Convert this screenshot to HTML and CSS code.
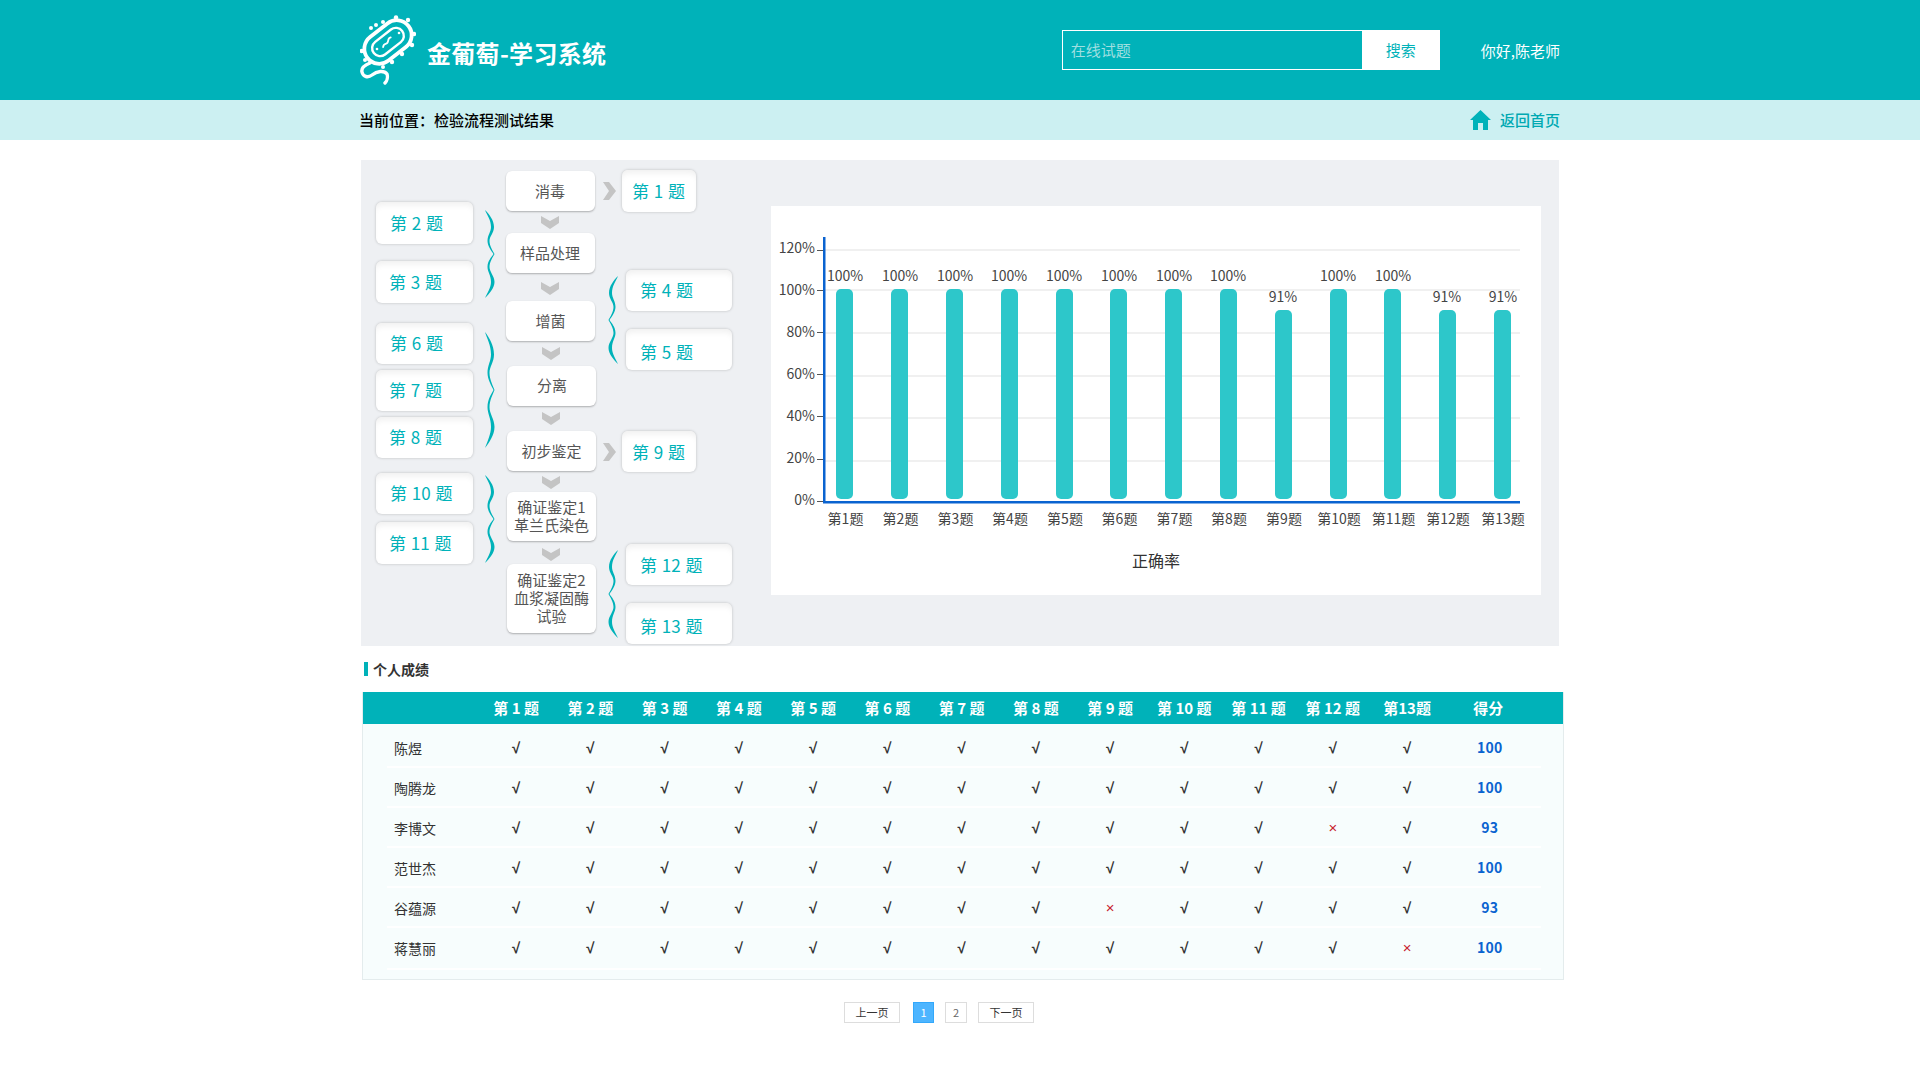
FILE: index.html
```html
<!DOCTYPE html>
<html lang="zh-CN">
<head>
<meta charset="utf-8">
<title>金葡萄-学习系统</title>
<link rel="stylesheet" href="styles.css">
</head>
<body>
<svg class="defs" width="0" height="0" aria-hidden="true">
  <defs>
    <symbol id="brace" viewBox="0 0 10 88" preserveAspectRatio="none">
      <path d="M0 0C4 4 9 10 9 17C9 23 4.500 26 4.500 31C4.500 36 8 41 9.500 44C8 47 4.500 52 4.500 57C4.500 62 9.500 66 9.500 72C9.500 78 4 84 0 88C2.500 83 6 77 6 72C6 65 2.500 62 2.500 57C2.500 51 6.500 47 8.500 44C6.500 41 2.500 36 2.500 31C2.500 25 6 22 6 17C6 10 2 5 0 0Z"/>
    </symbol>
    <symbol id="chev-d" viewBox="0 0 18 13">
      <path d="M0 0L9 5L18 0V7L9 13L0 7Z"/>
    </symbol>
    <symbol id="chev-r" viewBox="0 0 13 18">
      <path d="M0 0H6L13 9L6 18H0L6 9Z"/>
    </symbol>
  </defs>
</svg>

<header class="top">
  <div class="wrap top-in">
    <svg class="logo" viewBox="0 0 56 72" width="56" height="72">
      <g fill="none" stroke="#fff" stroke-linecap="round">
        <g transform="rotate(-38 28 27)">
          <rect x="2" y="12" width="52" height="30" rx="15" stroke-width="3.800"/>
          <rect x="10" y="19" width="36" height="16" rx="8" stroke-width="2.400"/>
          <path d="M21 28q2 -2 4 -1t4 -1t4 -1" stroke-width="1.800"/>
        </g>
        <path d="M10 48C5 50 1 53 2 57C3 62 8 63 12 60C17 56 24 55 27 59C28 62 27 66 25 68" stroke-width="3.400"/>
      </g>
      <g fill="#fff">
        <circle cx="36" cy="2.500" r="2.200"/><circle cx="48" cy="5" r="2.200"/><circle cx="54" cy="19" r="2.200"/>
        <circle cx="52" cy="30" r="2.200"/><circle cx="42" cy="39" r="2.200"/><circle cx="32" cy="47" r="2.200"/>
        <circle cx="23" cy="52" r="2"/><circle cx="11" cy="13" r="2"/><circle cx="1.800" cy="36" r="2.200"/>
        <circle cx="5" cy="45" r="2"/><circle cx="23" cy="7" r="2"/><circle cx="16" cy="10" r="2"/>
        <circle cx="39" cy="18" r="1.300"/><circle cx="17" cy="34" r="1.300"/>
      </g>
    </svg>
    <div class="brand">金葡萄-学习系统</div>
    <form class="search">
      <input class="search-input" type="text" placeholder="在线试题">
      <button class="search-btn" type="button">搜索</button>
    </form>
    <div class="greet">你好,陈老师</div>
  </div>
</header>

<nav class="crumb">
  <div class="wrap crumb-in">
    <div class="crumb-text">当前位置<span class="colon">：</span>检验流程测试结果</div>
    <a class="home">
      <svg class="home-ico" viewBox="0 0 21 20" width="21" height="20"><path d="M10.500 0L21 10H18V20H13V13H8V20H3V10H0Z"/></svg>
      <span>返回首页</span>
    </a>
  </div>
</nav>

<main class="wrap">
  <section class="panel">
    <div class="flow">
      <div class="node n1">消毒</div>
      <div class="node n2">样品处理</div>
      <div class="node n3">增菌</div>
      <div class="node n4">分离</div>
      <div class="node n5">初步鉴定</div>
      <div class="node n6">确证鉴定1<br>革兰氏染色</div>
      <div class="node n7">确证鉴定2<br>血浆凝固酶<br>试验</div>

      <svg class="chev cd1"><use href="#chev-d"/></svg>
      <svg class="chev cd2"><use href="#chev-d"/></svg>
      <svg class="chev cd3"><use href="#chev-d"/></svg>
      <svg class="chev cd4"><use href="#chev-d"/></svg>
      <svg class="chev cd5"><use href="#chev-d"/></svg>
      <svg class="chev cd6"><use href="#chev-d"/></svg>
      <svg class="chev cr1"><use href="#chev-r"/></svg>
      <svg class="chev cr2"><use href="#chev-r"/></svg>

      <svg class="brace b1"><use href="#brace" width="100%" height="100%"/></svg>
      <svg class="brace b2"><use href="#brace" width="100%" height="100%"/></svg>
      <svg class="brace b3"><use href="#brace" width="100%" height="100%"/></svg>
      <svg class="brace flip b4"><use href="#brace" width="100%" height="100%"/></svg>
      <svg class="brace flip b5"><use href="#brace" width="100%" height="100%"/></svg>

      <div class="q qs q1">第 1 题</div>
      <div class="q ql q2">第 2 题</div>
      <div class="q ql q3">第 3 题</div>
      <div class="q qr q4">第 4 题</div>
      <div class="q qr q5">第 5 题</div>
      <div class="q ql q6">第 6 题</div>
      <div class="q ql q7">第 7 题</div>
      <div class="q ql q8">第 8 题</div>
      <div class="q qs q9">第 9 题</div>
      <div class="q ql q10">第 10 题</div>
      <div class="q ql q11">第 11 题</div>
      <div class="q qr q12">第 12 题</div>
      <div class="q qr q13">第 13 题</div>
    </div>

    <div class="chart">
      <svg class="chart-svg" viewBox="0 0 770 389" width="770" height="389">
        <g class="grid">
          <rect x="53" y="43" width="696" height="2"/><rect x="53" y="83" width="696" height="2"/>
          <rect x="53" y="126" width="696" height="2"/><rect x="53" y="169" width="696" height="2"/>
          <rect x="53" y="211" width="696" height="2"/><rect x="53" y="254" width="696" height="2"/>
        </g>
        <g class="ticks">
          <rect x="46" y="44" width="7" height="1"/><rect x="46" y="84" width="7" height="1"/>
          <rect x="46" y="126" width="7" height="1"/><rect x="46" y="168" width="7" height="1"/>
          <rect x="46" y="210" width="7" height="1"/><rect x="46" y="253" width="7" height="1"/>
          <rect x="46" y="295" width="7" height="1"/>
        </g>
        <g class="bars">
          <rect x="65" y="83" width="17" height="210" rx="5"/>
          <rect x="120" y="83" width="17" height="210" rx="5"/>
          <rect x="175" y="83" width="17" height="210" rx="5"/>
          <rect x="230" y="83" width="17" height="210" rx="5"/>
          <rect x="285" y="83" width="17" height="210" rx="5"/>
          <rect x="339" y="83" width="17" height="210" rx="5"/>
          <rect x="394" y="83" width="17" height="210" rx="5"/>
          <rect x="449" y="83" width="17" height="210" rx="5"/>
          <rect x="504" y="104" width="17" height="189" rx="5"/>
          <rect x="559" y="83" width="17" height="210" rx="5"/>
          <rect x="613" y="83" width="17" height="210" rx="5"/>
          <rect x="668" y="104" width="17" height="189" rx="5"/>
          <rect x="723" y="104" width="17" height="189" rx="5"/>
        </g>
        <g class="axis">
          <rect x="52" y="31" width="2.500" height="266"/>
          <rect x="52" y="295" width="697" height="2.500"/>
        </g>
        <g class="lab end">
          <text x="44" y="47">120%</text><text x="44" y="89">100%</text><text x="44" y="131">80%</text>
          <text x="44" y="173">60%</text><text x="44" y="215">40%</text><text x="44" y="257">20%</text><text x="44" y="299">0%</text>
        </g>
        <g class="lab mid">
          <text x="74" y="75">100%</text><text x="129" y="75">100%</text><text x="184" y="75">100%</text>
          <text x="238" y="75">100%</text><text x="293" y="75">100%</text><text x="348" y="75">100%</text>
          <text x="403" y="75">100%</text><text x="457" y="75">100%</text><text x="512" y="96">91%</text>
          <text x="567" y="75">100%</text><text x="622" y="75">100%</text><text x="676" y="96">91%</text>
          <text x="732" y="96">91%</text>
        </g>
        <g class="lab mid">
          <text x="74.500" y="318">第1题</text><text x="129.500" y="318">第2题</text><text x="184.500" y="318">第3题</text>
          <text x="239" y="318">第4题</text><text x="294" y="318">第5题</text><text x="348.500" y="318">第6题</text>
          <text x="403.500" y="318">第7题</text><text x="458" y="318">第8题</text><text x="513" y="318">第9题</text>
          <text x="568" y="318">第10题</text><text x="622.500" y="318">第11题</text><text x="677" y="318">第12题</text>
          <text x="732" y="318">第13题</text>
        </g>
        <text class="chart-title" x="385" y="361">正确率</text>
      </svg>
    </div>
  </section>

  <h2 class="sub-title">个人成绩</h2>

  <section class="scores">
    <div class="row head">
      <span></span><span>第 1 题</span><span>第 2 题</span><span>第 3 题</span><span>第 4 题</span><span>第 5 题</span><span>第 6 题</span><span>第 7 题</span><span>第 8 题</span><span>第 9 题</span><span>第 10 题</span><span>第 11 题</span><span>第 12 题</span><span>第13题</span><span>得分</span>
    </div>
    <div class="body">
      <div class="row item"><span class="name">陈煜</span><span class="ok">√</span><span class="ok">√</span><span class="ok">√</span><span class="ok">√</span><span class="ok">√</span><span class="ok">√</span><span class="ok">√</span><span class="ok">√</span><span class="ok">√</span><span class="ok">√</span><span class="ok">√</span><span class="ok">√</span><span class="ok">√</span><span class="score">100</span></div>
      <div class="row item"><span class="name">陶腾龙</span><span class="ok">√</span><span class="ok">√</span><span class="ok">√</span><span class="ok">√</span><span class="ok">√</span><span class="ok">√</span><span class="ok">√</span><span class="ok">√</span><span class="ok">√</span><span class="ok">√</span><span class="ok">√</span><span class="ok">√</span><span class="ok">√</span><span class="score">100</span></div>
      <div class="row item"><span class="name">李博文</span><span class="ok">√</span><span class="ok">√</span><span class="ok">√</span><span class="ok">√</span><span class="ok">√</span><span class="ok">√</span><span class="ok">√</span><span class="ok">√</span><span class="ok">√</span><span class="ok">√</span><span class="ok">√</span><span class="x">×</span><span class="ok">√</span><span class="score">93</span></div>
      <div class="row item"><span class="name">范世杰</span><span class="ok">√</span><span class="ok">√</span><span class="ok">√</span><span class="ok">√</span><span class="ok">√</span><span class="ok">√</span><span class="ok">√</span><span class="ok">√</span><span class="ok">√</span><span class="ok">√</span><span class="ok">√</span><span class="ok">√</span><span class="ok">√</span><span class="score">100</span></div>
      <div class="row item"><span class="name">谷蕴源</span><span class="ok">√</span><span class="ok">√</span><span class="ok">√</span><span class="ok">√</span><span class="ok">√</span><span class="ok">√</span><span class="ok">√</span><span class="ok">√</span><span class="x">×</span><span class="ok">√</span><span class="ok">√</span><span class="ok">√</span><span class="ok">√</span><span class="score">93</span></div>
      <div class="row item"><span class="name">蒋慧丽</span><span class="ok">√</span><span class="ok">√</span><span class="ok">√</span><span class="ok">√</span><span class="ok">√</span><span class="ok">√</span><span class="ok">√</span><span class="ok">√</span><span class="ok">√</span><span class="ok">√</span><span class="ok">√</span><span class="ok">√</span><span class="x">×</span><span class="score">100</span></div>
    </div>
  </section>

  <div class="pager">
    <a class="pg wide">上一页</a>
    <a class="pg num on">1</a>
    <a class="pg num">2</a>
    <a class="pg wide">下一页</a>
  </div>
</main>
</body>
</html>
```
FILE: styles.css
```css
* { box-sizing: border-box; }
html, body { margin: 0; padding: 0; }
body {
  font-family: "Noto Sans CJK SC", "Noto Sans", sans-serif;
  color: #333;
  background: #fff;
  height: 1080px;
  overflow: hidden;
}
.defs { position: absolute; }
.wrap { width: 1200px; margin: 0 auto; }

/* header */
.top { height: 100px; background: #00b2b9; }
.top-in { display: flex; align-items: center; height: 100px; }
.logo { flex: none; margin-right: 11px; margin-top: 1px; }
.brand { color: #fff; font-size: 24px; font-weight: 700; line-height: 32px; letter-spacing: .3px; padding-top: 6px; }
.search { display: flex; margin-left: auto; height: 40px; }
.search-input {
  width: 300px; height: 40px; border: 1px solid #fff; border-right: 0; background: transparent;
  padding: 0 8px 2px; font: 15px "Noto Sans CJK SC", sans-serif; color: #fff; outline: 0; border-radius: 0;
}
.search-input::placeholder { color: #9fdfe0; opacity: 1; }
.search-btn {
  width: 78px; height: 40px; border: 0; background: #fff; color: #00b2b9; padding: 0 0 2px;
  font: 15px "Noto Sans CJK SC", sans-serif;
}
.greet { color: #fff; font-size: 15px; margin-left: 41px; padding-top: 1px; white-space: nowrap; }

/* breadcrumb */
.crumb { height: 40px; background: #ccf0f2; }
.crumb-in { display: flex; align-items: center; justify-content: space-between; height: 40px; }
.crumb-text { font-size: 15px; font-weight: 500; color: #000; margin-left: -1px; padding-bottom: 2px; }
.colon { font-family: "Noto Sans CJK TC", sans-serif; }
.home { display: flex; align-items: center; gap: 9px; color: #00a9b2; font-size: 15px; font-weight: 500; }
.home span { padding-bottom: 2px; }
.home-ico { fill: #00b2b9; }

/* panel */
.panel {
  display: flex; width: 1198px; height: 486px; margin: 20px 0 0 1px; background: #eef0f3;
  padding: 46px 0 0 0;
}
.flow { position: absolute; left: 0; top: 0; width: 771px; height: 646px; }
.chart { width: 770px; height: 389px; margin-left: 410px; background: #fff; }
.chart-svg { display: block; }
.grid rect { fill: #f0f0f0; }
.ticks rect { fill: #555; }
.bars rect { fill: #2dc7ca; }
.axis rect { fill: #0a63d0; }
.lab text { font-size: 14px; fill: #444; }
.end text { text-anchor: end; }
.mid text { text-anchor: middle; }
.chart-title { font-size: 16px; fill: #333; text-anchor: middle; }

/* flow nodes */
.node {
  position: absolute; width: 89px; background: #fff; border-radius: 6px;
  box-shadow: 0 1px 2px rgba(0,0,0,.28);
  display: flex; align-items: center; justify-content: center; text-align: center;
  font-size: 15px; line-height: 18px; color: #555;
}
.n1 { left: 506px; top: 171px; height: 40px; padding-right: 1px; }
.n2 { left: 506px; top: 233px; height: 40px; padding-right: 1px; }
.n3 { left: 506px; top: 301px; height: 40px; }
.n4 { left: 507px; top: 366px; height: 40px; padding: 0 0 2px 1px; }
.n5 { left: 507px; top: 431px; height: 40px; }
.n6 { left: 507px; top: 492px; height: 49px; padding-bottom: 2px; }
.n7 { left: 507px; top: 564px; height: 69px; padding-bottom: 2px; }

.chev { position: absolute; fill: #c4c4c4; }
.cd1, .cd2, .cd3, .cd4, .cd5, .cd6 { width: 18px; height: 13px; }
.cd1 { left: 541px; top: 216px; }
.cd2 { left: 541px; top: 282px; }
.cd3 { left: 542px; top: 347px; }
.cd4 { left: 542px; top: 412px; }
.cd5 { left: 542px; top: 476px; }
.cd6 { left: 542px; top: 548px; }
.cr1, .cr2 { width: 13px; height: 18px; left: 603px; }
.cr1 { top: 182px; }
.cr2 { top: 443px; }

.brace { position: absolute; width: 10px; height: 88px; fill: #00b2b9; }
.flip { transform: scaleX(-1); }
.b1 { left: 485px; top: 210px; }
.b2 { left: 485px; top: 332px; height: 116px; }
.b3 { left: 485px; top: 475px; }
.b4 { left: 608px; top: 276px; }
.b5 { left: 608px; top: 550px; }

.q {
  position: absolute; height: 41px; background: #fff; border-radius: 6px;
  box-shadow: 0 0 3px rgba(0,0,0,.22), inset 0 6px 6px -3px #f0f0f0;
  display: flex; align-items: center;
  font-size: 17px; color: #00b2b9; white-space: nowrap; word-spacing: 1px;
  padding-bottom: 2px;
}
.qs { width: 74px; left: 622px; padding-left: 10px; }
.ql { width: 97px; left: 376px; padding-left: 14px; }
.qr { width: 106px; left: 626px; padding-left: 14px; }
.q1 { top: 170px; height: 42px; padding-bottom: 1px; }
.q2 { top: 202px; height: 42px; }
.q3 { top: 261px; height: 42px; padding-left: 13px; }
.q4 { top: 270px; }
.q5 { top: 329px; padding-bottom: 0; padding-top: 3px; }
.q6 { top: 323px; }
.q7 { top: 370px; padding-left: 13px; }
.q8 { top: 417px; padding-left: 13px; }
.q9 { top: 431px; padding-bottom: 1px; }
.q10 { top: 473px; }
.q11 { top: 522px; height: 42px; padding-left: 13px; }
.q12 { top: 544px; padding-bottom: 1px; }
.q13 { top: 603px; padding-bottom: 0; padding-top: 4px; }

/* scores */
.sub-title {
  margin: 16px 0 16px 4px; height: 14px; padding-left: 5px; border-left: 4px solid #00b2b9;
  font-size: 14px; line-height: 14px; font-weight: 700; color: #333;
}
.scores {
  width: 1202px; margin-left: 2px; height: 288px; background: #f7fdfd;
  border: 1px solid #e4eced; border-top: 0;
}
.row { display: grid; grid-template-columns: 92px repeat(13, 74.25px) 88px; justify-items: center; align-items: center; }
.head { height: 32px; padding: 0 0 2px 24px; background: #00b2b9; color: #fff; font-size: 15px; font-weight: 700; }
.body { padding-top: 4px; margin: 0 22px 0 24px; }
.item { height: 40px; border-bottom: 2px solid #fff; font-size: 14px; color: #333; }
.item:last-child { height: 42px; padding-bottom: 2px; }
.name { justify-self: start; padding: 2px 0 0 7px; }
.ok { font-family: "Liberation Sans", sans-serif; font-size: 15px; font-weight: 700; color: #333; }
.score { color: #0a63d0; font-weight: 700; padding-left: 3px; letter-spacing: .2px; }
.x { font-family: "Liberation Sans", sans-serif; font-size: 15px; color: #c8242f; padding-top: 1px; }

/* pager */
.pager { display: flex; justify-content: center; margin-top: 22px; padding-right: 42px; }
.pg {
  height: 21px; border: 1px solid #ddd; font-size: 11px; line-height: 19px; text-align: center; color: #333; background: #fff;
}
.wide { width: 56px; }
.num { width: 22px; color: #666; margin-left: 11px; }
.num.on { width: 21px; background: #4db5ff; border-color: #33a8fb; color: #fff; margin-left: 13px; }
.num + .wide { margin-left: 11px; }
```
